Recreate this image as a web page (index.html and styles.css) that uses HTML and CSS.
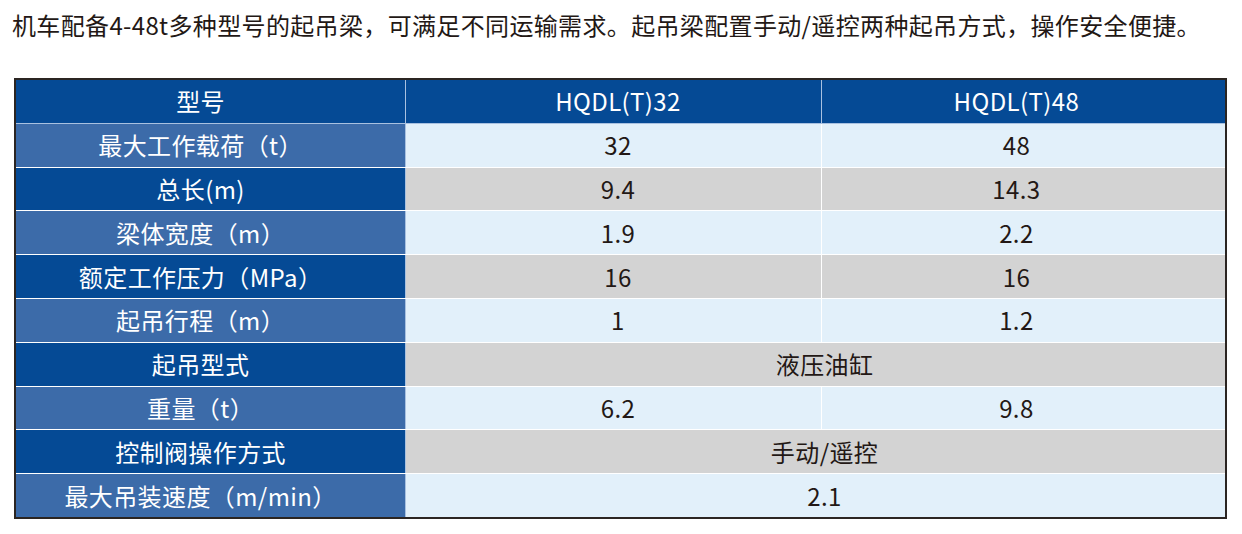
FILE: index.html
```html
<!DOCTYPE html>
<html lang="zh-CN">
<head>
<meta charset="utf-8">
<link rel="stylesheet" href="styles.css">
</head>
<body>
<p class="intro">机车配备4-48t多种型号的起吊梁，可满足不同运输需求。起吊梁配置手动/遥控两种起吊方式，操作安全便捷。</p>
<table class="spec">
  <colgroup>
    <col class="c1"><col class="c2"><col class="c3">
  </colgroup>
  <thead>
    <tr>
      <th class="k">型号</th>
      <th class="v2">HQDL(T)32</th>
      <th class="v3">HQDL(T)48</th>
    </tr>
  </thead>
  <tbody>
    <tr class="odd"><th class="k">最大工作载荷（t）</th><td class="v2">32</td><td class="v3">48</td></tr>
    <tr class="even"><th class="k">总长(m)</th><td class="v2">9.4</td><td class="v3">14.3</td></tr>
    <tr class="odd"><th class="k">梁体宽度（m）</th><td class="v2">1.9</td><td class="v3">2.2</td></tr>
    <tr class="even"><th class="k">额定工作压力（MPa）</th><td class="v2">16</td><td class="v3">16</td></tr>
    <tr class="odd"><th class="k">起吊行程（m）</th><td class="v2">1</td><td class="v3">1.2</td></tr>
    <tr class="even"><th class="k">起吊型式</th><td class="span" colspan="2">液压油缸</td></tr>
    <tr class="odd"><th class="k">重量（t）</th><td class="v2">6.2</td><td class="v3">9.8</td></tr>
    <tr class="even"><th class="k">控制阀操作方式</th><td class="span" colspan="2">手动/遥控</td></tr>
    <tr class="odd"><th class="k">最大吊装速度（m/min）</th><td class="span" colspan="2">2.1</td></tr>
  </tbody>
</table>
</body>
</html>
```

FILE: styles.css
```css
html, body {
  margin: 0;
  padding: 0;
  background: #ffffff;
}

body {
  font-family: "Noto Sans CJK SC", "Noto Sans", sans-serif;
  color: #231815;
}

.intro {
  margin: 0;
  padding: 9px 0 0 12px;
  font-size: 24px;
  line-height: 32px;
  letter-spacing: 0.35px;
  color: #231815;
}

.spec {
  margin: 37px 0 0 14px;
  width: 1213px;
  border-collapse: collapse;
  border: 2px solid #2b2522;
  table-layout: fixed;
  font-size: 24px;
}

.c1 { width: 390px; }
.c2 { width: 415px; }
.c3 { width: 404px; }

.spec th,
.spec td {
  height: 42.8px;
  padding: 0;
  border: 1px solid #ffffff;
  text-align: center;
  vertical-align: middle;
  font-weight: 400;
  line-height: 1;
  letter-spacing: 0.4px;
}

.spec thead th {
  background: #054a95;
  color: #ffffff;
  border-bottom-color: #a9c1e0;
  border-left-color: #a9c1e0;
  border-right-color: #a9c1e0;
}

.spec .k {
  color: #ffffff;
  padding-right: 20px;
  border-right-color: #a9c1e0;
}

.spec .odd .k { background: #3c6ba9; }
.spec .even .k { background: #054a95; }

.spec .odd td { background: #e2f0fa; }
.spec .even td { background: #d3d3d3; }

.spec .v2 { padding-left: 9px; }
.spec .v3 { padding-right: 14px; }
.spec .span { padding-left: 18px; }

.spec td.v2 { border-right-color: #ffffff; }
.spec tbody tr:first-child th,
.spec tbody tr:first-child td {
  border-top-color: #a9c1e0;
}
```
